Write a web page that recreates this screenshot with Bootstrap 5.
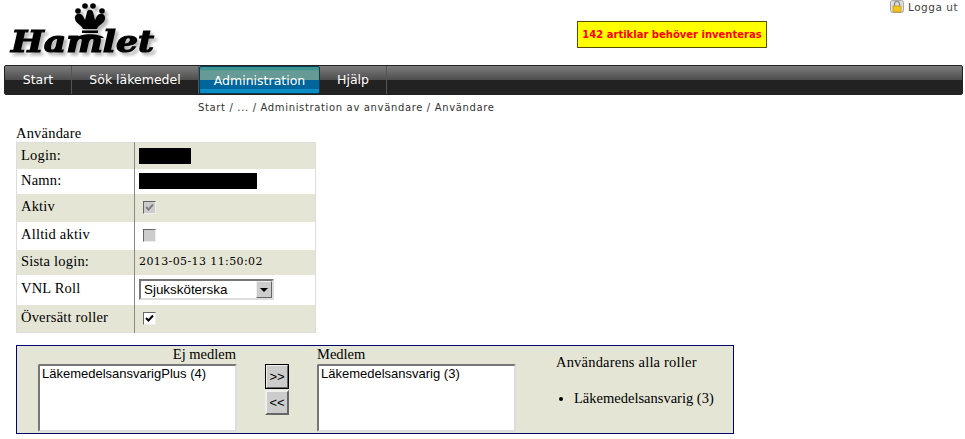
<!DOCTYPE html>
<html lang="sv">
<head>
  <meta charset="UTF-8" />
  <title>Hamlet - Användare</title>
  <link href="https://cdn.jsdelivr.net/npm/bootstrap@5.3.0/dist/css/bootstrap.min.css" rel="stylesheet">
  <style>
    body {
      background: #fff;
      color: #000;
      font-family: "Liberation Serif", serif;
      font-size: 14.5px;
      letter-spacing: .2px;
      line-height: 1.2;
      padding: 0 3px 0 4px;
    }
    .top-head { height: 65px; }
    .logo-box { width: 160px; margin-left: 6px; }
    .logo-art { filter: drop-shadow(3px 3px 1.5px #b5b5b5); overflow: visible; }
    .logo-word {
      font-family: "DejaVu Serif", serif;
      font-style: italic;
      font-weight: 700;
      font-size: 30px;
      letter-spacing: 0;
      stroke: #000;
      stroke-width: 1.2px;
    }
    .stock-note {
      margin: 21px 0 0 407px;
      width: 190px;
      height: 27px;
      background: #ff0;
      border: 1px solid #555000;
      color: #f00;
      font: bold 10px/25px "DejaVu Sans", sans-serif;
      letter-spacing: 0;
      text-align: center;
      white-space: nowrap;
    }
    .logout {
      margin-left: auto;
      padding: 0 4px 0 0;
      color: #444;
      font: 10.5px/14px "DejaVu Sans", sans-serif;
      letter-spacing: .5px;
      height: 14px;
    }
    .main-menu {
      height: 30px;
      margin: 0 -1px 0 0;
      padding: 0;
      list-style: none;
      border: 1px solid #222;
      border-radius: 2px;
      background: linear-gradient(#7c7c7c 0, #777 6%, #4d4d4d 50%, #222 50%, #222 100%);
    }
    .main-menu li {
      color: #fff;
      font: 12.5px/28px "DejaVu Sans", sans-serif;
      letter-spacing: 0;
      text-align: center;
      border-right: 1px solid #555;
    }
    .main-menu .item-start { width: 67px; }
    .main-menu .item-search { width: 127px; }
    .main-menu .item-admin {
      width: 121px;
      height: 28px;
      border: 1px solid #0b3d57;
      border-radius: 2px;
      background: linear-gradient(#3d9490 0, #3d9490 12%, #659a96 14%, #659a96 50%, #00659a 50%, #00659a 85%, #0a8cc4 86%);
    }
    .main-menu .item-help { width: 67px; }
    .crumbs {
      margin: 6px 0 0 194px;
      color: #333;
      font: 10px/13px "DejaVu Sans", sans-serif;
      letter-spacing: .65px;
    }
    .user-title { margin: 12px 0 0 12px; height: 16px; line-height: 15px; }
    .user-table {
      width: 300px;
      margin: 0 0 0 12px;
      border-collapse: collapse;
      table-layout: fixed;
      border: 1px solid #ddd;
    }
    .user-table td { padding: 0 0 0 4px; vertical-align: middle; }
    .user-table td:first-child { width: 118px; border-right: 1px solid #888; padding-bottom: 1px; }
    .user-table tr:nth-child(odd) { background: #e5e5d5; }
    .user-table td:last-child { padding-left: 4px; font-family: "DejaVu Serif", serif; font-size: 11px; letter-spacing: .4px; }
    .row-a { height: 26px; }
    .row-b { height: 25px; }
    .row-c { height: 28px; }
    .row-d { height: 30px; }
    .hidden-value { display: block; height: 16px; background: #000; }
    .check-box {
      appearance: none;
      display: block;
      width: 13px;
      height: 13px;
      margin: 0 0 0 4px;
      border-style: solid;
      border-width: 1px;
      border-color: #666 #eee #eee #666;
      background: #ccc center/11px 11px no-repeat;
    }
    .check-on {
      background-color: #fff;
      background-image: url("data:image/svg+xml,%3Csvg xmlns='http://www.w3.org/2000/svg' viewBox='0 0 11 11'%3E%3Cpath d='M2 5l2.5 2.5L9 2.5' fill='none' stroke='%23000' stroke-width='2'/%3E%3C/svg%3E");
    }
    .check-off {
      background-color: #ccc;
      background-image: url("data:image/svg+xml,%3Csvg xmlns='http://www.w3.org/2000/svg' viewBox='0 0 11 11'%3E%3Cpath d='M2 5l2.5 2.5L9 2.5' fill='none' stroke='%23808080' stroke-width='2'/%3E%3C/svg%3E");
    }
    .role-select {
      display: block;
      width: 135px;
      height: 21px;
      padding: 0 0 0 3px;
      border-style: solid;
      border-width: 2px;
      border-color: #777 #ddd #ddd #777;
      border-radius: 0;
      background: #fff;
      font: 13.4px/17px "Liberation Sans", sans-serif;
      letter-spacing: 0;
    }
    .role-arrow {
      width: 16px;
      height: 17px;
      background: #ccc;
      border: 1px solid;
      border-color: #eee #666 #666 #eee;
      color: #000;
    }
    .member-box {
      width: 718px;
      height: 89px;
      margin: 12px 0 0 12px;
      background: #e5e5d5;
      border: 1px solid #00006e;
    }
    .list-col { width: 198px; flex: none; }
    .list-col-left { margin-left: 21px; }
    .col-head { height: 18px; line-height: 16px; letter-spacing: 0; }
    .list-field {
      display: block;
      width: 199px;
      height: 68px;
      padding: 0 2px;
      border-style: solid;
      border-width: 2px;
      border-color: #777 #ddd #ddd #777;
      background: #fff;
      font: 13px/14px "Liberation Sans", sans-serif;
      letter-spacing: 0;
      overflow: hidden;
    }
    .list-field option { padding: 0; min-height: 14px; }
    .move-col { width: 24px; flex: none; margin: 18px 28px 0 29px; }
    .move-btn {
      display: block;
      width: 24px;
      height: 25px;
      padding: 0;
      background: #ccc;
      border: 2px solid;
      border-color: #eee #666 #666 #eee;
      color: #000;
      font: 13px/19px "Liberation Sans", sans-serif;
      letter-spacing: 0;
    }
    .move-btn:first-child { outline: 1px solid #000; outline-offset: -1px; margin-bottom: 1px; }
    .all-roles { margin: 8px 0 0 41px; }
    .all-roles ul { margin: 19px 0 0; padding-left: 18px; letter-spacing: 0; }
  </style>
</head>
<body>
  <div class="top-head d-flex align-items-start">
    <div class="logo-box">
      <svg class="logo-art" width="150" height="60" viewBox="0 0 150 60" role="img" aria-label="Hamlet">
        <g transform="translate(-10 0)">
          <circle cx="78" cy="11" r="2.8"/><circle cx="85" cy="6" r="2.8"/><circle cx="93" cy="6" r="2.8"/><circle cx="102" cy="11" r="2.8"/>
          <path d="M83 29C81 24 76 24 75 19 74 14 80 12 83 16L85 20 87 12C88 9 92 9 93 12L95 20 97 16C100 12 106 14 105 19 104 24 99 24 97 29Z"/>
          <path d="M82 30.500h16v2.500H82z"/>
          <path d="M76 38C80 33 100 33 104 38Z"/>
        </g>
        <text class="logo-word" x="1" y="52" textLength="143" lengthAdjust="spacingAndGlyphs">Hamlet</text>
      </svg>
    </div>
    <div class="stock-note">142 artiklar behöver inventeras</div>
    <div class="logout d-flex align-items-start gap-1">
      <svg width="14" height="13" viewBox="0 0 14 13">
        <rect x=".5" y=".5" width="13" height="12" rx="2" fill="#ddd" stroke="#aaa"/>
        <path d="M4.500 6V4a2.500 2.500 0 0 1 5 0v2" fill="none" stroke="#888" stroke-width="1.2"/>
        <rect x="3" y="6" width="8" height="6" fill="#f5c518" stroke="#b8860b" stroke-width=".6"/>
      </svg>
      <span>Logga ut</span>
    </div>
  </div>

  <ul class="main-menu d-flex">
    <li class="item-start">Start</li>
    <li class="item-search">Sök läkemedel</li>
    <li class="item-admin">Administration</li>
    <li class="item-help">Hjälp</li>
  </ul>

  <div class="crumbs">Start / ... / Administration av användare / Användare</div>

  <div class="user-title">Användare</div>
  <table class="user-table">
    <tr class="row-a"><td>Login:</td><td><span class="hidden-value" style="width:52px"></span></td></tr>
    <tr class="row-b"><td>Namn:</td><td><span class="hidden-value" style="width:118px"></span></td></tr>
    <tr class="row-c"><td>Aktiv</td><td><input type="checkbox" class="check-box check-off" checked disabled></td></tr>
    <tr class="row-c"><td>Alltid aktiv</td><td><input type="checkbox" class="check-box" disabled></td></tr>
    <tr class="row-b"><td>Sista login:</td><td>2013-05-13 11:50:02</td></tr>
    <tr class="row-d"><td>VNL Roll</td><td>
      <div class="role-select d-flex justify-content-between align-items-center">
        <span>Sjuksköterska</span>
        <span class="role-arrow d-flex align-items-center justify-content-center">
          <svg width="8" height="4" viewBox="0 0 8 4"><path d="M0 0h8L4 4z"/></svg>
        </span>
      </div>
    </td></tr>
    <tr class="row-c"><td>Översätt roller</td><td><input type="checkbox" class="check-box check-on" checked></td></tr>
  </table>

  <div class="member-box d-flex">
    <div class="list-col list-col-left">
      <div class="col-head text-end">Ej medlem</div>
      <select class="list-field" multiple><option>LäkemedelsansvarigPlus (4)</option></select>
    </div>
    <div class="move-col">
      <button class="move-btn" type="button">&gt;&gt;</button>
      <button class="move-btn" type="button">&lt;&lt;</button>
    </div>
    <div class="list-col">
      <div class="col-head">Medlem</div>
      <select class="list-field" multiple><option>Läkemedelsansvarig (3)</option></select>
    </div>
    <div class="all-roles">
      <div>Användarens alla roller</div>
      <ul><li>Läkemedelsansvarig (3)</li></ul>
    </div>
  </div>
  <script src="https://cdn.jsdelivr.net/npm/bootstrap@5.3.0/dist/js/bootstrap.bundle.min.js"></script>
</body>
</html>
